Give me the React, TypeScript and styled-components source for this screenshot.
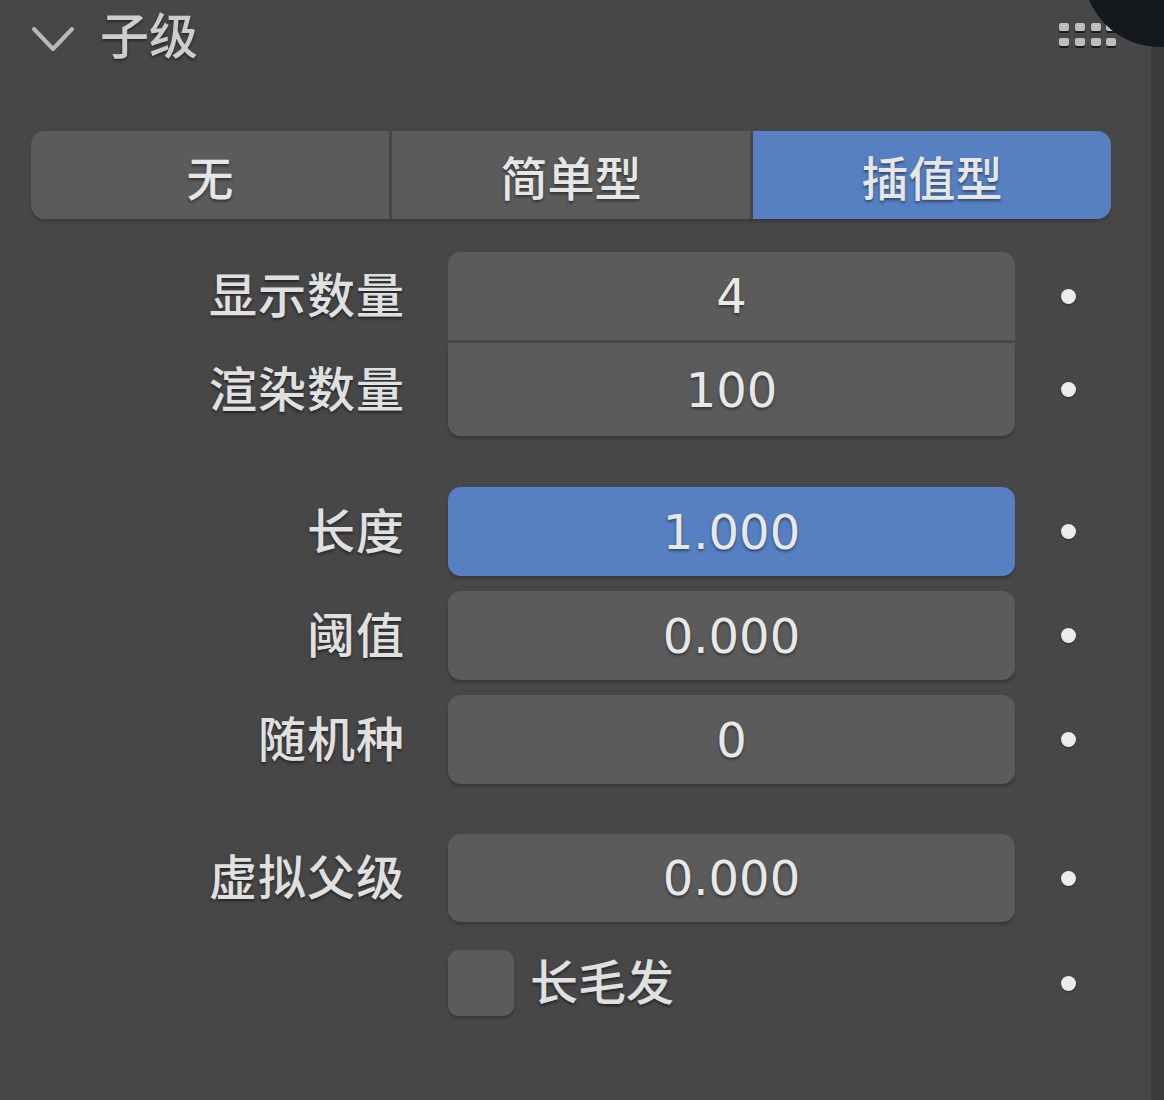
import React from "react";
import styled, { createGlobalStyle } from "styled-components";

const Global = createGlobalStyle`
  html, body { margin: 0; padding: 0; background: #474747; }
  body { width: 1164px; height: 1100px; overflow: hidden; }
  * { box-sizing: border-box; }
`;

const FONT = `"DejaVu Sans", "Noto Sans CJK SC", sans-serif`;

const Page = styled.div`
  position: relative;
  width: 1164px;
  height: 1100px;
  display: flex;
  background: #474747;
  font-family: ${FONT};
  color: #e4e4e4;
  overflow: hidden;
`;

const Main = styled.div`
  flex: 1;
  display: flex;
  flex-direction: column;
`;

const Edge = styled.div`
  width: 13px;
  background: #3c3c3c;
`;

const Corner = styled.div`
  position: absolute;
  left: 1083px;
  top: -107px;
  width: 154px;
  height: 154px;
  border-radius: 50%;
  background: #15181d;
`;

const Header = styled.div`
  height: 75px;
  display: flex;
  align-items: center;
  padding-left: 31px;
  padding-right: 34px;
`;

const Title = styled.span`
  margin-left: 25px;
  font-size: 49px;
  font-weight: 500;
  color: #cdcdcd;
  text-shadow: 0 2px 3px rgba(0, 0, 0, 0.45);
  line-height: 1;
`;

const Grip = styled.svg`
  margin-left: auto;
`;

const Content = styled.div`
  display: flex;
  flex-direction: column;
  padding-top: 56px;
`;

const Segmented = styled.div`
  margin-left: 31px;
  width: 1080px;
  height: 88px;
  display: flex;
  gap: 3px;
  border-radius: 14px;
  overflow: hidden;
  box-shadow: 0 3px 3px rgba(0, 0, 0, 0.18);
`;

const Segment = styled.div<{ $active?: boolean }>`
  flex: 1;
  display: flex;
  align-items: center;
  justify-content: center;
  background: ${(p) => (p.$active ? "#5680c2" : "#5b5b5b")};
  font-size: 47px;
  font-weight: 500;
  color: #e6e6e6;
  text-shadow: 0 2px 3px rgba(0, 0, 0, 0.45);
`;

const Row = styled.div<{ $mt: number }>`
  display: grid;
  grid-template-columns: 405px 567px 20px;
  column-gap: 43px;
  align-items: center;
  margin-top: ${(p) => p.$mt}px;
`;

const Label = styled.div`
  justify-self: end;
  font-size: 48px;
  font-weight: 500;
  line-height: 1;
  color: #e0e0e0;
  text-shadow: 0 2px 3px rgba(0, 0, 0, 0.5);
  letter-spacing: 1px;
`;

type Join = "single" | "top" | "bottom";

const Field = styled.div<{ $active?: boolean; $join?: Join; $h: number }>`
  height: ${(p) => p.$h}px;
  display: flex;
  align-items: center;
  justify-content: center;
  background: ${(p) => (p.$active ? "#5680c2" : "#5b5b5b")};
  border-radius: ${(p) =>
    p.$join === "top" ? "13px 13px 0 0" : p.$join === "bottom" ? "0 0 13px 13px" : "13px"};
  font-size: 48px;
  color: #e8e8e8;
  text-shadow: 0 2px 3px rgba(0, 0, 0, 0.45);
  box-shadow: ${(p) => (p.$join === "top" ? "none" : "0 3px 3px rgba(0, 0, 0, 0.2)")};
`;

const DotCell = styled.div`
  display: flex;
  justify-content: center;
`;

const Dot = styled.span`
  width: 15px;
  height: 15px;
  border-radius: 50%;
  background: #ececec;
  box-shadow: 0 1px 2px rgba(0, 0, 0, 0.4);
`;

const CheckWrap = styled.div`
  display: flex;
  align-items: center;
  gap: 16px;
`;

const Box = styled.div`
  width: 66px;
  height: 66px;
  border-radius: 11px;
  background: #5b5b5b;
  box-shadow: 0 3px 3px rgba(0, 0, 0, 0.2);
`;

const CheckText = styled.span`
  font-size: 48px;
  font-weight: 500;
  color: #e0e0e0;
  text-shadow: 0 2px 3px rgba(0, 0, 0, 0.5);
  line-height: 1;
`;

const Chevron = () => (
  <svg width="44" height="30" viewBox="0 0 44 30">
    <polyline
      points="3,6 22,26 41,6"
      fill="none"
      stroke="#b8b8b8"
      strokeWidth="4"
      strokeLinecap="round"
      strokeLinejoin="round"
    />
  </svg>
);

const GripIcon = () => {
  const xs = [0, 16, 32, 47];
  const ys = [0, 15];
  return (
    <Grip width="58" height="30" viewBox="0 0 58 30">
      {ys.map((y) =>
        xs.map((x) => (
          <g key={`${x}-${y}`}>
            <rect x={x} y={y + 6} width="10" height="4" rx="2" fill="#111" opacity="0.8" />
            <rect x={x} y={y} width="10" height="8" rx="2" fill="#bdbdbd" />
          </g>
        ))
      )}
    </Grip>
  );
};

type Prop = {
  label: string;
  value: string;
  mt: number;
  h: number;
  active?: boolean;
  join?: Join;
};

const props: Prop[] = [
  { label: "显示数量", value: "4", mt: 33, h: 88, join: "top" },
  { label: "渲染数量", value: "100", mt: 3, h: 93, join: "bottom" },
  { label: "长度", value: "1.000", mt: 51, h: 89, active: true },
  { label: "阈值", value: "0.000", mt: 15, h: 89 },
  { label: "随机种", value: "0", mt: 15, h: 89 },
  { label: "虚拟父级", value: "0.000", mt: 50, h: 88 },
];

export default function App() {
  return (
    <Page>
      <Global />
      <Main>
        <Header>
          <Chevron />
          <Title>子级</Title>
          <GripIcon />
        </Header>
        <Content>
          <Segmented>
            <Segment>无</Segment>
            <Segment>简单型</Segment>
            <Segment $active>插值型</Segment>
          </Segmented>
          {props.map((p) => (
            <Row key={p.label} $mt={p.mt}>
              <Label>{p.label}</Label>
              <Field $h={p.h} $active={p.active} $join={p.join ?? "single"}>
                {p.value}
              </Field>
              <DotCell>
                <Dot />
              </DotCell>
            </Row>
          ))}
          <Row $mt={28}>
            <span />
            <CheckWrap>
              <Box />
              <CheckText>长毛发</CheckText>
            </CheckWrap>
            <DotCell>
              <Dot />
            </DotCell>
          </Row>
        </Content>
      </Main>
      <Edge />
      <Corner />
    </Page>
  );
}
